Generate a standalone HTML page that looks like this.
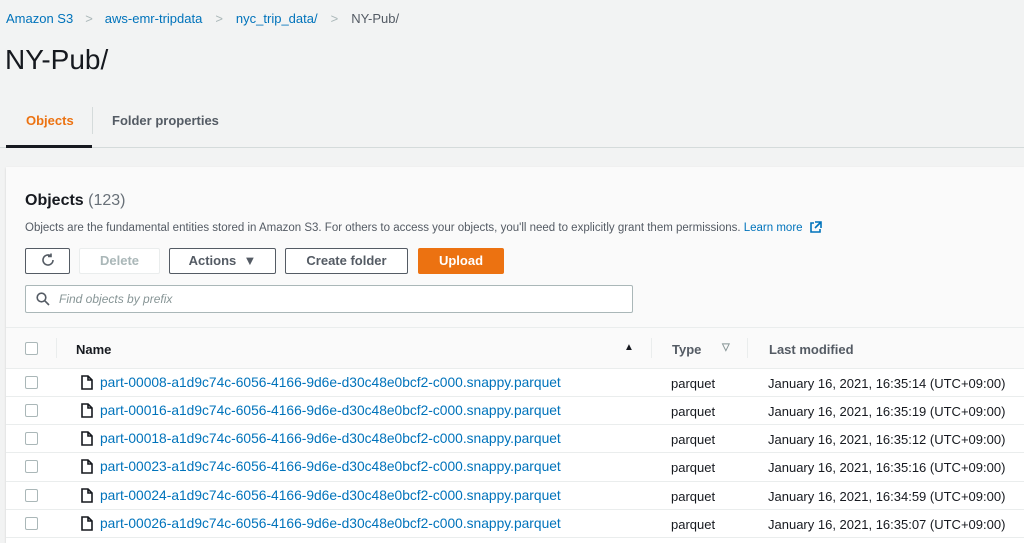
<!DOCTYPE html><html><head><style>
html,body{margin:0;width:1024px;height:543px;overflow:hidden}
body{background:#f2f3f3;font-family:"Liberation Sans",sans-serif;color:#16191f;position:relative}
.a{position:absolute;white-space:nowrap}
.lnk{color:#0073bb}
.btn{position:absolute;top:248px;height:26px;border:1px solid #545b64;border-radius:2px;box-sizing:border-box;background:#fff;font-weight:bold;font-size:13px;color:#545b64;text-align:center;line-height:24px}
.row{position:absolute;left:6px;width:1018px;height:28px;background:#fff;border-top:1px solid #eaeded;font-size:13px}
.row .lnk{font-size:13.8px;top:6px!important}
.cb{position:absolute;left:19px;top:7px;width:11px;height:11px;border:1px solid #aab7b8;border-radius:2px;background:#fff}
</style></head><body>
<div class="a" style="left:6px;top:11px;font-size:13px"><span class="lnk">Amazon S3</span><span style="color:#aab7b8;margin:0 12px">&gt;</span><span class="lnk">aws-emr-tripdata</span><span style="color:#aab7b8;margin:0 13px">&gt;</span><span class="lnk">nyc_trip_data/</span><span style="color:#aab7b8;margin:0 13px">&gt;</span><span style="color:#545b64">NY-Pub/</span></div>
<div class="a" style="left:5px;top:44px;font-size:28px">NY-Pub/</div>
<div class="a" style="left:26px;top:113px;font-size:13px;font-weight:bold;color:#ec7211">Objects</div>
<div class="a" style="left:92px;top:107px;width:1px;height:27px;background:#d5dbdb"></div>
<div class="a" style="left:112px;top:113px;font-size:13px;font-weight:bold;color:#545b64">Folder properties</div>
<div class="a" style="left:0;top:147px;width:1024px;height:1px;background:#d5dbdb"></div>
<div class="a" style="left:6px;top:145px;width:86px;height:3px;background:#16191f"></div>
<div class="a" style="left:6px;top:167px;width:1018px;height:376px;background:#fafafa;box-shadow:0 1px 2px rgba(0,0,0,.15)"></div>
<div class="a" style="left:25px;top:192px;font-size:16px;font-weight:bold">Objects <span style="font-weight:normal;color:#687078">(123)</span></div>
<div class="a" style="left:25px;top:221px;font-size:11.5px;color:#545b64">Objects are the fundamental entities stored in Amazon S3. For others to access your objects, you'll need to explicitly grant them permissions. <span class="lnk">Learn more</span> <svg width="12" height="12" viewBox="0 0 12 12" style="vertical-align:-2px;margin-left:4px"><path d="M5 1H11V7M11 1L5 7M4 2H1V11H10V8" fill="none" stroke="#0073bb" stroke-width="1.6"/></svg></div>
<div class="btn" style="left:25px;width:45px"><svg width="14" height="14" viewBox="0 0 14 14" style="vertical-align:-2px"><path d="M12 7A5 5 0 1 1 10 3M10 0.5V3.5H7" fill="none" stroke="#545b64" stroke-width="1.6"/></svg></div>
<div class="btn" style="left:79px;width:81px;border-color:#eaeded;color:#aab7b8">Delete</div>
<div class="btn" style="left:169px;width:107px">Actions &nbsp;▼</div>
<div class="btn" style="left:285px;width:123px">Create folder</div>
<div class="btn" style="left:418px;width:86px;background:#ec7211;border-color:#ec7211;color:#fff">Upload</div>
<div class="a" style="left:25px;top:285px;width:608px;height:28px;border:1px solid #aab7b8;border-radius:2px;background:#fff;box-sizing:border-box"><svg width="14" height="14" viewBox="0 0 14 14" style="position:absolute;left:10px;top:6px"><circle cx="5.5" cy="5.5" r="4.3" fill="none" stroke="#545b64" stroke-width="1.6"/><path d="M8.7 8.7L13 13" stroke="#545b64" stroke-width="1.6"/></svg><span style="position:absolute;left:33px;top:6px;font-size:12px;font-style:italic;color:#879596">Find objects by prefix</span></div>
<div class="a" style="left:6px;top:327px;width:1018px;height:41px;background:#fafafa;border-top:1px solid #eaeded;border-bottom:1px solid #eaeded;font-size:13px;font-weight:bold;color:#545b64">
<div class="cb" style="top:14px"></div>
<div class="a" style="left:50px;top:10px;width:1px;height:20px;background:#eaeded"></div>
<div class="a" style="left:70px;top:14px;color:#16191f">Name</div>
<div class="a" style="left:618px;top:14px;color:#16191f;font-size:10px">▲</div>
<div class="a" style="left:645px;top:10px;width:1px;height:20px;background:#eaeded"></div>
<div class="a" style="left:666px;top:14px">Type</div>
<div class="a" style="left:716px;top:14px;font-size:10px;color:#879596">▽</div>
<div class="a" style="left:741px;top:10px;width:1px;height:20px;background:#eaeded"></div>
<div class="a" style="left:763px;top:14px">Last modified</div>
</div>
<div class="row" style="top:368px"><div class="cb"></div><svg class="a" style="left:75px;top:6px" width="12" height="15" viewBox="0 0 12 15"><path d="M1 1H7L11 5V14H1Z M7 1V5H11" fill="none" stroke="#16191f" stroke-width="1.6"/></svg><div class="a lnk" style="left:94px;top:7px">part-00008-a1d9c74c-6056-4166-9d6e-d30c48e0bcf2-c000.snappy.parquet</div><div class="a" style="left:665px;top:7px">parquet</div><div class="a" style="left:762px;top:7px">January 16, 2021, 16:35:14 (UTC+09:00)</div></div>
<div class="row" style="top:396px"><div class="cb"></div><svg class="a" style="left:75px;top:6px" width="12" height="15" viewBox="0 0 12 15"><path d="M1 1H7L11 5V14H1Z M7 1V5H11" fill="none" stroke="#16191f" stroke-width="1.6"/></svg><div class="a lnk" style="left:94px;top:7px">part-00016-a1d9c74c-6056-4166-9d6e-d30c48e0bcf2-c000.snappy.parquet</div><div class="a" style="left:665px;top:7px">parquet</div><div class="a" style="left:762px;top:7px">January 16, 2021, 16:35:19 (UTC+09:00)</div></div>
<div class="row" style="top:424px"><div class="cb"></div><svg class="a" style="left:75px;top:6px" width="12" height="15" viewBox="0 0 12 15"><path d="M1 1H7L11 5V14H1Z M7 1V5H11" fill="none" stroke="#16191f" stroke-width="1.6"/></svg><div class="a lnk" style="left:94px;top:7px">part-00018-a1d9c74c-6056-4166-9d6e-d30c48e0bcf2-c000.snappy.parquet</div><div class="a" style="left:665px;top:7px">parquet</div><div class="a" style="left:762px;top:7px">January 16, 2021, 16:35:12 (UTC+09:00)</div></div>
<div class="row" style="top:452px"><div class="cb"></div><svg class="a" style="left:75px;top:6px" width="12" height="15" viewBox="0 0 12 15"><path d="M1 1H7L11 5V14H1Z M7 1V5H11" fill="none" stroke="#16191f" stroke-width="1.6"/></svg><div class="a lnk" style="left:94px;top:7px">part-00023-a1d9c74c-6056-4166-9d6e-d30c48e0bcf2-c000.snappy.parquet</div><div class="a" style="left:665px;top:7px">parquet</div><div class="a" style="left:762px;top:7px">January 16, 2021, 16:35:16 (UTC+09:00)</div></div>
<div class="row" style="top:481px"><div class="cb"></div><svg class="a" style="left:75px;top:6px" width="12" height="15" viewBox="0 0 12 15"><path d="M1 1H7L11 5V14H1Z M7 1V5H11" fill="none" stroke="#16191f" stroke-width="1.6"/></svg><div class="a lnk" style="left:94px;top:7px">part-00024-a1d9c74c-6056-4166-9d6e-d30c48e0bcf2-c000.snappy.parquet</div><div class="a" style="left:665px;top:7px">parquet</div><div class="a" style="left:762px;top:7px">January 16, 2021, 16:34:59 (UTC+09:00)</div></div>
<div class="row" style="top:509px"><div class="cb"></div><svg class="a" style="left:75px;top:6px" width="12" height="15" viewBox="0 0 12 15"><path d="M1 1H7L11 5V14H1Z M7 1V5H11" fill="none" stroke="#16191f" stroke-width="1.6"/></svg><div class="a lnk" style="left:94px;top:7px">part-00026-a1d9c74c-6056-4166-9d6e-d30c48e0bcf2-c000.snappy.parquet</div><div class="a" style="left:665px;top:7px">parquet</div><div class="a" style="left:762px;top:7px">January 16, 2021, 16:35:07 (UTC+09:00)</div></div>
<div class="row" style="top:537px;height:6px"></div>
</body></html>
